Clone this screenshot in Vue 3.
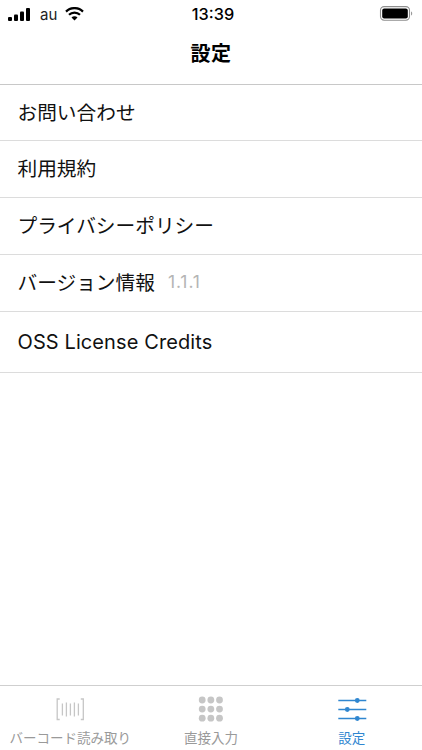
<script setup>
const rows = [
  { label: 'お問い合わせ', first: true },
  { label: '利用規約' },
  { label: 'プライバシーポリシー' },
  { label: 'バージョン情報', note: '1.1.1' },
  { label: 'OSS License Credits', tall: true },
]
const dots = Array.from({ length: 9 }, (_, i) => ({ cx: 5.2 + (i % 3) * 8.65, cy: 4 + Math.floor(i / 3) * 9.1 }))
</script>

<template>
  <div class="screen">
    <div class="status">
      <div class="status-left">
        <svg class="signal" width="23" height="13" viewBox="0 0 23 13" fill="#000">
          <rect x="0" y="9" width="4" height="4" rx="1" />
          <rect x="6" y="6.5" width="4" height="6.5" rx="1" />
          <rect x="12" y="3.5" width="4" height="9.5" rx="1" />
          <rect x="18" y="0" width="4" height="13" rx="1" />
        </svg>
        <span class="carrier">au</span>
        <svg class="wifi" width="19" height="14" viewBox="0 0 19 14">
          <path d="M1 4.6a12 12 0 0 1 17 0" fill="none" stroke="#000" stroke-width="2.2" />
          <path d="M4 7.8a7.8 7.8 0 0 1 11 0" fill="none" stroke="#000" stroke-width="2.2" />
          <path d="M6.5 10.4a4.2 4.2 0 0 1 6 0L9.5 13.6z" fill="#000" />
        </svg>
      </div>
      <span class="time">13:39</span>
      <div class="status-right">
        <svg width="36" height="16" viewBox="0 0 36 16">
          <rect x="2.5" y="0.6" width="29" height="13.6" rx="3.6" fill="none" stroke="#8e8e8e" stroke-width="1.1" />
          <rect x="4.2" y="2.4" width="25.6" height="10" rx="2" fill="#000" />
          <path d="M33 5.4v4c.8-.3 1.2-1.1 1.2-2s-.4-1.7-1.2-2z" fill="#999" />
        </svg>
      </div>
    </div>

    <header class="nav">設定</header>

    <main class="list">
      <div v-for="row in rows" :key="row.label" class="row" :class="{ tall: row.tall, first: row.first }">
        <span class="label">{{ row.label }}</span>
        <span v-if="row.note" class="note">{{ row.note }}</span>
      </div>
    </main>

    <footer class="tabs">
      <div class="tab">
        <svg class="icon" width="30" height="26" viewBox="0 0 30 26" fill="none" stroke="#c6c6c6" stroke-width="1.3">
          <path d="M4.7 2.5H2.2V23H4.7M25.8 2.5H28.3V23H25.8" />
          <path d="M7.4 7V19M11.4 6V20M15.4 7V19M19.4 6V20M23.4 7V19" />
        </svg>
        <span class="tab-label">バーコード読み取り</span>
      </div>
      <div class="tab">
        <svg class="icon" width="27" height="27" viewBox="0 0 27 27" fill="#c6c6c6">
          <circle v-for="d in dots" :key="`${d.cx}-${d.cy}`" :cx="d.cx" :cy="d.cy" r="3.4" />
        </svg>
        <span class="tab-label">直接入力</span>
      </div>
      <div class="tab active">
        <svg class="icon" width="30" height="26" viewBox="0 0 30 26" fill="#2f86d0" stroke="#2f86d0" stroke-width="1.4">
          <path d="M1.3 4H29.3M1.3 13H29.3M1.3 22H29.3" fill="none" />
          <circle cx="20.3" cy="4" r="1.7" />
          <circle cx="10.3" cy="13" r="1.7" />
          <circle cx="20.3" cy="22" r="1.7" />
        </svg>
        <span class="tab-label">設定</span>
      </div>
    </footer>
  </div>
</template>

<style scoped>
.screen {
  display: flex;
  flex-direction: column;
  width: 422px;
  height: 750px;
  overflow: hidden;
  background: #fff;
  color: #000;
  font-family: "Inter", "Noto Sans CJK JP", sans-serif;
}
.status {
  display: flex;
  align-items: center;
  justify-content: space-between;
  height: 28px;
  padding: 0 8px 0 8px;
  flex: none;
}
.status-left {
  display: flex;
  align-items: center;
  width: 120px;
}
.carrier {
  margin-left: 9px;
  font-size: 15px;
  color: #222;
}
.wifi {
  margin-left: 8px;
}
.time {
  font-size: 16.3px;
  font-weight: 500;
}
.status-right {
  display: flex;
  justify-content: flex-end;
  width: 116px;
}
.nav {
  flex: none;
  height: 57px;
  box-sizing: border-box;
  padding-top: 9px;
  border-bottom: 1px solid #c8c8c8;
  font-size: 20px;
  font-weight: 700;
  line-height: 34px;
  text-align: center;
  letter-spacing: 0.5px;
}
.list {
  flex: 1;
}
.row {
  display: flex;
  align-items: center;
  height: 57px;
  box-sizing: border-box;
  padding: 0 18px 3px;
  border-bottom: 1px solid #dcdcdc;
  font-size: 19.7px;
  color: #111;
}
.row.first {
  height: 56px;
}
.row.tall {
  height: 61px;
  padding-bottom: 1px;
  font-size: 20px;
  letter-spacing: 0.1px;
}
.label {
  margin-left: -0.5px;
}
.note {
  margin-left: 13px;
  font-size: 17.5px;
  letter-spacing: 0.9px;
  color: #b5b5b5;
}
.tabs {
  flex: none;
  display: grid;
  grid-template-columns: repeat(3, 1fr);
  height: 65px;
  box-sizing: border-box;
  border-top: 1px solid #cfcfcf;
}
.tab {
  display: flex;
  flex-direction: column;
  align-items: center;
  padding-top: 10px;
  color: #9a9a9a;
}
.tab.active {
  color: #2f86d0;
}
.icon {
  flex: none;
  height: 27px;
}
.tab-label {
  margin-top: 6px;
  font-size: 13.5px;
  line-height: 18px;
  white-space: nowrap;
}
</style>

<style>
html, body {
  margin: 0;
  background: #fff;
}
</style>
